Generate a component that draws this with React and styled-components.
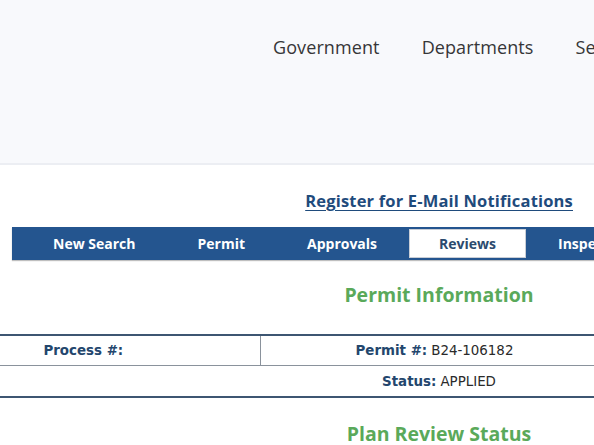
import styled, { createGlobalStyle } from "styled-components"

const Global = createGlobalStyle`
  body {
    margin: 0;
    background: #ffffff;
    overflow: hidden;
    font-family: "Open Sans", sans-serif;
  }
`

const Page = styled.div`
  width: 878px;
  display: flex;
  flex-direction: column;
`

const Header = styled.header`
  height: 165px;
  background: #f8f9fc;
  border-bottom: 2px solid #eceef3;
  box-sizing: border-box;
  padding: 35px 0 0 273px;
`

const Nav = styled.nav`
  display: flex;
  gap: 42px;
  white-space: nowrap;
`

const NavItem = styled.a`
  font-family: "Open Sans", sans-serif;
  font-size: 18px;
  line-height: 24px;
  color: #363638;
  text-decoration: none;
  letter-spacing: 0.1px;
`

const LinkRow = styled.div`
  width: 594px;
  display: flex;
  justify-content: flex-end;
  padding: 25px 21px 0 0;
  box-sizing: border-box;
`

const MailLink = styled.a`
  font-family: "Open Sans", sans-serif;
  font-weight: 700;
  font-size: 16.5px;
  line-height: 22px;
  letter-spacing: 0.18px;
  color: #1f4b7c;
  text-decoration: underline;
  text-underline-offset: 3px;
`

const TabBar = styled.div`
  margin: 15px 0 0 12px;
  height: 33px;
  background: #24558f;
  display: flex;
  align-items: stretch;
  gap: 2px;
  padding: 2px 0 2px 11px;
  box-sizing: border-box;
  white-space: nowrap;
  box-shadow: 0 1px 1px rgba(0, 0, 0, 0.25);
`

const Tab = styled.div`
  display: flex;
  align-items: center;
  padding: 0 30px;
  font-family: "Open Sans", sans-serif;
  font-weight: 700;
  font-size: 14px;
  color: ${p => (p.active ? "#2b4a6e" : "#ffffff")};
  background: ${p => (p.active ? "#ffffff" : "transparent")};
  box-shadow: ${p => (p.active ? "inset 0 0 0 1px #c9ced6" : "none")};
`

const Heading = styled.h2`
  margin: ${p => p.top}px 0 0;
  text-align: center;
  font-family: "Open Sans", sans-serif;
  font-weight: 700;
  font-size: 19.5px;
  line-height: 26px;
  color: #5aa95a;
`

const Table = styled.div`
  margin: 26px 0 0 -89px;
  width: 1046px;
  border-top: 2px solid #3d5672;
  border-bottom: 2px solid #3d5672;
  display: grid;
  grid-template-columns: repeat(3, 1fr);
`

const Cell = styled.div`
  grid-column: ${p => p.span || "auto"};
  height: 30px;
  display: flex;
  align-items: center;
  justify-content: center;
  font-family: "DejaVu Sans", Verdana, sans-serif;
  font-size: 13.4px;
  color: #2a2a2a;
  border-left: ${p => (p.divider ? "1px solid #8a929c" : "none")};
  border-bottom: ${p => (p.last ? "none" : "1px solid #8a929c")};
  padding-left: ${p => p.shift || 0}px;
  box-sizing: border-box;
`

const Label = styled.span`
  font-weight: 700;
  color: #23466d;
  margin-right: 4px;
`

const tabs = ["New Search", "Permit", "Approvals", "Reviews", "Inspections", "Conditions"]

export default function App() {
  return (
    <Page>
      <Global />
      <Header>
        <Nav>
          <NavItem>Government</NavItem>
          <NavItem>Departments</NavItem>
          <NavItem>Services</NavItem>
          <NavItem>Business</NavItem>
        </Nav>
      </Header>

      <LinkRow>
        <MailLink href="#">Register for E-Mail Notifications</MailLink>
      </LinkRow>

      <TabBar>
        {tabs.map(t => (
          <Tab key={t} active={t === "Reviews"}>{t}</Tab>
        ))}
      </TabBar>

      <Heading top={22}>Permit Information</Heading>

      <Table>
        <Cell><Label>Process #:</Label></Cell>
        <Cell divider><Label>Permit #:</Label>B24-106182</Cell>
        <Cell divider><Label>Type:</Label>BUILDING</Cell>
        <Cell span="1 / 4" last shift={10}><Label>Status:</Label>APPLIED</Cell>
      </Table>

      <Heading top={23}>Plan Review Status</Heading>
    </Page>
  )
}
